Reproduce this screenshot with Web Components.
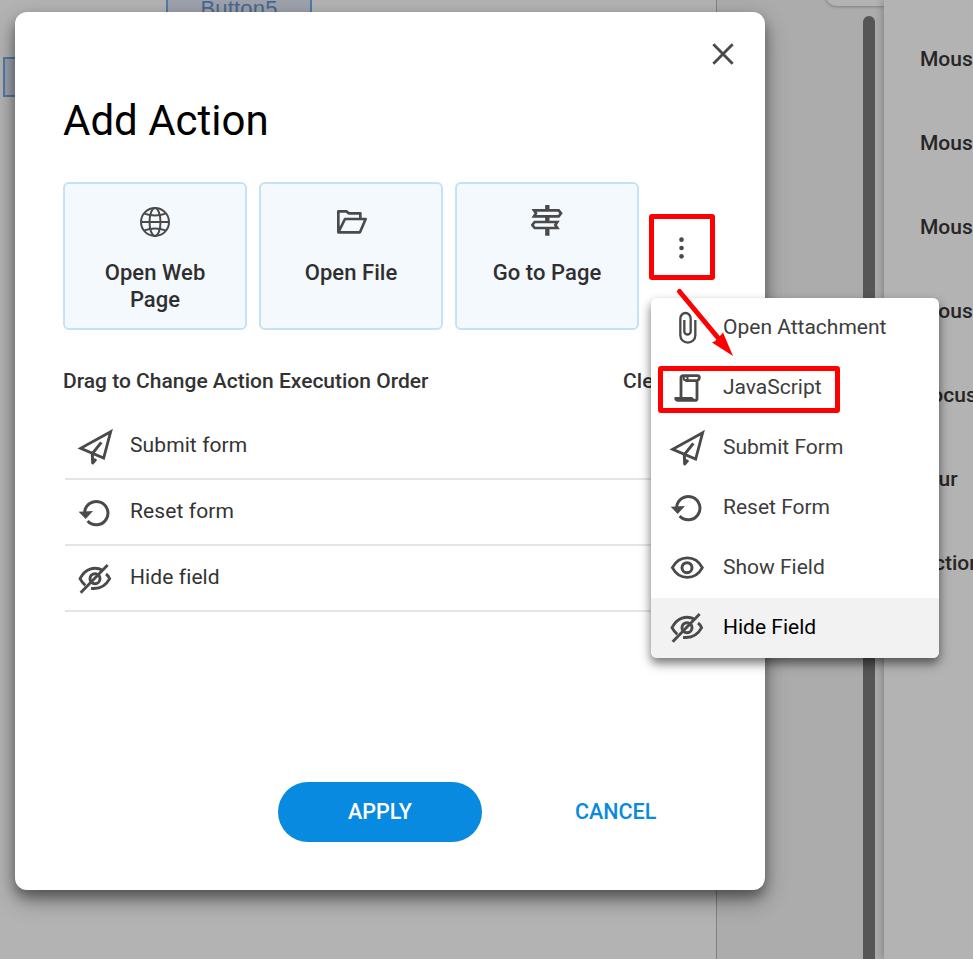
<!DOCTYPE html>
<html lang="en">
<head>
<meta charset="utf-8">
<title>Add Action</title>
<style>
html,body{margin:0;height:100%;overflow:hidden}
body{font-family:Roboto,"Liberation Sans",sans-serif;color:#2f2f2f;background:#b3b3b3}
</style>
</head>
<body>
<action-screen></action-screen>
<script>
const ICONS = {
  globe: [90,90,'<g stroke-width="6"><circle cx="45" cy="45" r="42"/><ellipse cx="45" cy="45" rx="16.5" ry="42"/><path d="M3 45H87M13 20Q45 31 77 20M13 70Q45 59 77 70"/></g>'],
  folder: [90,72,'<path stroke-width="8" stroke-linejoin="round" d="M4 67V4H28L36 10H70V25M4 67L24 27H86L69 67Z"/>'],
  sign: [96,92,'<g stroke-width="8"><path d="M9 16H83L90 25L83 34H9L15 25ZM79 51H11L4 60L11 69H79L73 60Z"/><path stroke-width="13" d="M49 0V16M49 34V51M49 69V92"/></g>'],
  dots: [15,66,'<g fill="currentColor" stroke="none"><circle cx="7.500" cy="8" r="7"/><circle cx="7.500" cy="33" r="7"/><circle cx="7.500" cy="58" r="7"/></g>'],
  close: [66,66,'<path stroke-width="8.500" d="M4 4L62 62M62 4L4 62"/>'],
  clip: [108,108,'<path stroke-width="7" d="M79 30V76A22.500 22 0 0 1 34 76V26A15.500 17 0 0 1 65 26V66A10 11 0 0 1 46 66V30"/>'],
  script: [108,108,'<g stroke-width="8.500" stroke-linejoin="round"><path d="M36 84V24Q36 17 43 17H85Q91 17 91 23T85 32H49M84 32V86Q84 91 78 91H32Q20 92 20 85H68Q69 91 78 91"/><circle cx="50" cy="25" r="6" stroke-width="6"/></g>'],
  plane: [108,108,'<g stroke-width="8.500"><path d="M101 8L11 58L80 87Z"/><path stroke-width="9" stroke-linejoin="round" d="M73 40L46 74L47 102L57 90"/></g>'],
  reset: [108,108,'<path stroke-width="9" d="M23 51A35 35 0 1 1 32 78"/><path d="M5 50L48 48L26 72Z" fill="currentColor" stroke="none"/>'],
  eye: [108,108,'<g stroke-width="8.500"><path d="M10 53C31 14 79 14 100 53C79 92 31 92 10 53Z"/><circle cx="54" cy="53" r="15" stroke-width="9"/></g>'],
  hide: [108,108,'<g stroke-width="8.500"><path d="M77 28C52 14 24 24 9 53Q15 65 25 73M87 39Q95 45 98 53C85 77 65 85 42 82"/><circle cx="54" cy="53" r="15" stroke-width="9"/><path d="M92 12L11 95"/></g>']
};

const define = (name, css, html) => customElements.define(name, class extends HTMLElement {
  connectedCallback() {
    if (this.shadowRoot) return;
    const t = document.createElement('template');
    t.innerHTML = `<style>*{box-sizing:border-box}:host{box-sizing:border-box}${css}</style>` + html;
    this.attachShadow({mode:'open'}).append(t.content.cloneNode(true));
  }
});

customElements.define('ui-icon', class extends HTMLElement {
  connectedCallback() {
    const [w,h,body] = ICONS[this.getAttribute('name')];
    const root = this.shadowRoot || this.attachShadow({mode:'open'});
    root.innerHTML = `<style>:host{display:block;flex:none;color:#4a4a4a}svg{display:block}</style>
      <svg width="${w/3}" height="${h/3}" viewBox="0 0 ${w} ${h}" fill="none" stroke="currentColor">${body}</svg>`;
  }
});

define('form-button', `:host{display:flex;justify-content:center;border:2px solid #4f7ba8;background:#9ea2ad;color:#47688f;font:22px/24px "Liberation Sans",sans-serif}`, `<slot></slot>`);

define('document-page', `:host{display:block;position:relative;width:717px;flex:none;border-right:1px solid #808080;background:#b3b3b3}
.five{position:absolute;left:166px;top:-30px;width:146px;height:70px;padding-top:25px;letter-spacing:.2px}
.side{position:absolute;left:3px;top:57px;width:60px;height:40px}`,
`<form-button class="five">Button5</form-button><form-button class="side"></form-button>`);

define('scroll-track', `:host{display:flex;justify-content:flex-end;flex:1;padding:16px 9px 0 0;background:#acacac;position:relative}
.thumb{width:12px;background:#565656;border-radius:6px 6px 0 0}
.tool{position:absolute;left:108px;right:0;top:-30px;height:36px;border-radius:12px 0 0 12px;background:#b3b3b3;box-shadow:0 1px 3px #0004}`,
`<div class="tool"></div><div class="thumb"></div>`);

define('event-panel', `:host{display:flex;flex-direction:column;width:89px;flex:none;padding:17px 0 0 36px;background:#b3b3b3;box-shadow:-1px 0 8px #0004;position:relative;color:#262626}
span{height:84px;line-height:84px;font-size:21px;font-weight:500;white-space:nowrap}`,
`<span>Mouse Up</span><span>Mouse Down</span><span>Mouse Enter</span><span>Mouse Exit</span><span>Focus</span><span>Blur</span><span>Actions</span>`);

define('action-card', `:host{display:flex;flex-direction:column;align-items:center;width:184px;height:148px;border:2px solid #c3e1f7;border-radius:6px;background:#f4f9fd;padding:20px 28px 0}
.i{height:36px;display:flex;align-items:center;justify-content:center}
.t{margin-top:19px;font-size:22px;line-height:27px;font-weight:500;text-align:center;color:#2f2f2f;letter-spacing:.05px}`,
`<div class="i"><slot name="icon"></slot></div><div class="t"><slot></slot></div>`);

define('action-row', `:host{display:flex;align-items:center;height:66px;border-bottom:2px solid #e5e5e5;padding-left:12px;gap:17px;font-size:21px;letter-spacing:.1px;color:#333}
.i{padding-top:1px}.t{padding-bottom:3px}`,
`<div class="i"><slot name="icon"></slot></div><div class="t"><slot></slot></div>`);

define('menu-item', `:host{display:flex;align-items:center;height:60px;padding-left:18px;gap:18px;font-size:21px;color:#3d3d3d;white-space:nowrap}
:host([active]){background:#f2f2f2;color:#000}.t{padding-bottom:3px}`,
`<slot name="icon"></slot><div class="t"><slot></slot></div>`);

define('action-menu', `:host{display:block;width:288px;background:#fff;border-radius:6px;overflow:hidden;box-shadow:0 5px 8px #0006,0 6px 14px #0003}`, `<slot></slot>`);

define('action-dialog', `:host{display:flex;flex-direction:column;width:750px;height:878px;padding:0 48px;border-radius:12px;background:#fff;box-shadow:0 7px 12px #0005,0 10px 24px #0005}
.close{display:flex;justify-content:flex-end;height:84px;margin-right:-17px;padding-top:31px}
h1{margin:0;font-size:42px;font-weight:400;line-height:50px;color:#000;height:86px}
.cards{display:flex;gap:12px;align-items:center}
.more{flex:1;display:flex;justify-content:center;padding:0 5px 16px 0}
.heading{display:flex;justify-content:space-between;padding-right:15px;height:72px;padding-top:38px;line-height:26px;font-size:21px;font-weight:500;color:#333}
.list{margin:12px 0 0 2px}
.buttons{display:flex;margin-top:170px;padding-left:215px;align-items:center}
button{border:0;background:none;padding:0 0 1px;color:#078ae0;font:500 21.500px/58px Roboto,sans-serif}
.apply{width:204px;height:60px;border-radius:30px;background:#078ae0;color:#fff}
.cancel{margin-left:93px}`,
`<div class="close"><ui-icon name="close"></ui-icon></div>
<h1>Add Action</h1>
<div class="cards">
<action-card><ui-icon slot="icon" name="globe"></ui-icon>Open Web Page</action-card>
<action-card><ui-icon slot="icon" name="folder" style="margin-left:2px"></ui-icon>Open File</action-card>
<action-card><ui-icon slot="icon" name="sign" style="margin:0 0 3px 0"></ui-icon>Go to Page</action-card>
<div class="more"><ui-icon name="dots"></ui-icon></div></div>
<div class="heading"><span>Drag to Change Action Execution Order</span><span>Clear All</span></div>
<div class="list">
<action-row><ui-icon slot="icon" name="plane"></ui-icon>Submit form</action-row>
<action-row><ui-icon slot="icon" name="reset"></ui-icon>Reset form</action-row>
<action-row><ui-icon slot="icon" name="hide"></ui-icon>Hide field</action-row></div>
<div class="buttons"><button class="apply">APPLY</button><button class="cancel">CANCEL</button></div>`);

define('mark-box', `:host{display:block;border:5px solid #f00;border-radius:3px}`, ``);
define('mark-arrow', `:host{display:block}svg{display:block}`,
`<svg width="64" height="76" viewBox="0 0 64 76"><path d="M7.500 6.500L52 60" stroke="#f00" stroke-width="5" stroke-linecap="round"/><path d="M61 71L40 57.500Q44 56 46 53Q49 50 51 47.500Z" fill="#f00"/></svg>`);

define('action-screen', `:host{display:block;position:relative;width:973px;height:959px;overflow:hidden}
.app{display:flex;height:100%}
.over{position:absolute}
.dialog{left:15px;top:12px}.menu{left:651px;top:298px}
.m1{left:649px;top:214px;width:66px;height:66px}
.m2{left:658px;top:366px;width:182px;height:47px}
.arrow{left:672px;top:285px}`,
`<div class="app"><document-page></document-page><scroll-track></scroll-track><event-panel></event-panel></div>
<action-dialog class="over dialog"></action-dialog>
<action-menu class="over menu">
<menu-item><ui-icon slot="icon" name="clip"></ui-icon>Open Attachment</menu-item>
<menu-item><ui-icon slot="icon" name="script"></ui-icon>JavaScript</menu-item>
<menu-item><ui-icon slot="icon" name="plane"></ui-icon>Submit Form</menu-item>
<menu-item><ui-icon slot="icon" name="reset"></ui-icon>Reset Form</menu-item>
<menu-item><ui-icon slot="icon" name="eye"></ui-icon>Show Field</menu-item>
<menu-item active><ui-icon slot="icon" name="hide"></ui-icon>Hide Field</menu-item>
</action-menu>
<mark-box class="over m1"></mark-box><mark-box class="over m2"></mark-box><mark-arrow class="over arrow"></mark-arrow>`);
</script>
</body>
</html>
